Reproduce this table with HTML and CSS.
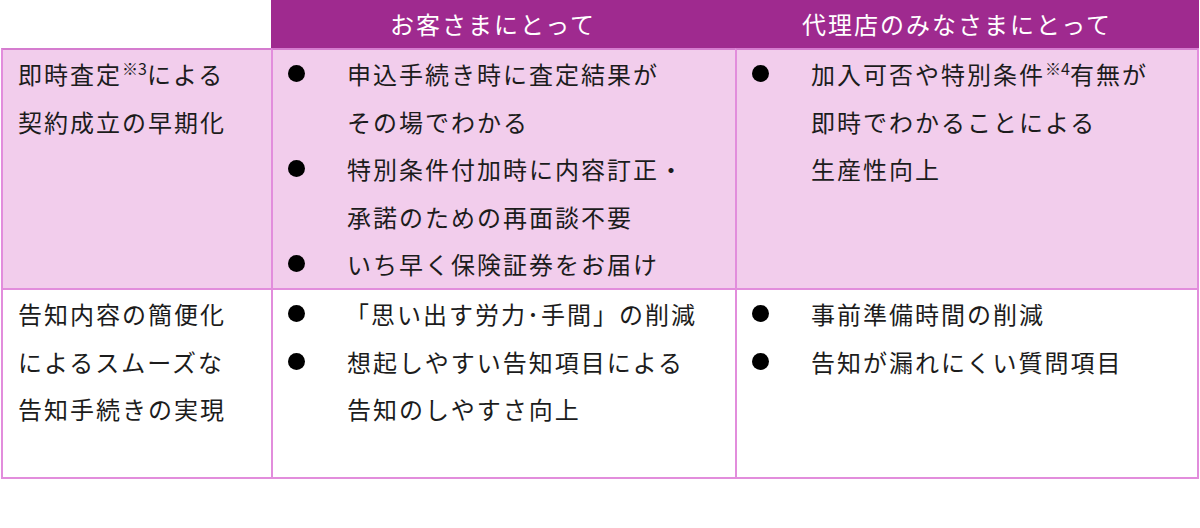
FILE: index.html
```html
<!DOCTYPE html>
<html lang="ja">
<head>
<meta charset="utf-8">
<link rel="stylesheet" href="styles.css">
</head>
<body>
<div class="table">
  <div class="head-blank"></div>
  <div class="head">お客さまにとって</div>
  <div class="head">代理店のみなさまにとって</div>

  <div class="cell label pink first">即時査定<sup class="note">※3</sup>による<br>契約成立の早期化</div>
  <div class="cell pink">
    <ul class="list">
      <li><span class="dot"></span><span>申込手続き時に査定結果が<br>その場でわかる</span></li>
      <li><span class="dot"></span><span>特別条件付加時に内容訂正・<br>承諾のための再面談不要</span></li>
      <li><span class="dot"></span><span>いち早く保険証券をお届け</span></li>
    </ul>
  </div>
  <div class="cell pink last">
    <ul class="list">
      <li><span class="dot"></span><span>加入可否や特別条件<sup class="note">※4</sup>有無が<br>即時でわかることによる<br>生産性向上</span></li>
    </ul>
  </div>

  <div class="cell label first bottom">告知内容の簡便化<br>によるスムーズな<br>告知手続きの実現</div>
  <div class="cell bottom">
    <ul class="list">
      <li><span class="dot"></span><span class="bracket">「思い出す労力<span class="mid">･</span>手間」の削減</span></li>
      <li><span class="dot"></span><span>想起しやすい告知項目による<br>告知のしやすさ向上</span></li>
    </ul>
  </div>
  <div class="cell bottom last">
    <ul class="list">
      <li><span class="dot"></span><span>事前準備時間の削減</span></li>
      <li><span class="dot"></span><span>告知が漏れにくい質問項目</span></li>
    </ul>
  </div>
</div>
</body>
</html>
```

FILE: styles.css
```css
html, body {
  margin: 0;
  padding: 0;
  background: #ffffff;
}

body {
  font-family: "Noto Sans CJK JP", "Noto Sans", sans-serif;
  color: #1c1c1c;
}

.table {
  display: grid;
  grid-template-columns: 270px 464px 464px;
  grid-template-rows: 48px 240px 191px;
  margin-left: 1px;
  width: 1198px;
}

.head-blank {
  background: #ffffff;
}

.head {
  background: #9f2a8f;
  color: #ffffff;
  font-size: 24px;
  letter-spacing: 2px;
  display: flex;
  align-items: center;
  justify-content: center;
  padding-right: 20px;
  line-height: 48px;
}

.cell {
  font-size: 24px;
  letter-spacing: 2px;
  line-height: 47.5px;
  border-left: 2px solid #e28ddc;
  border-top: 2px solid #d57ccf;
  padding: 0 0 0 15px;
  box-sizing: border-box;
}

.cell.pink {
  background: #f2cdec;
}

.cell.last {
  border-right: 2px solid #e28ddc;
}

.cell.bottom {
  border-top: 2px solid #e28ddc;
  border-bottom: 2px solid #e28ddc;
}

.note {
  font-size: 16px;
  letter-spacing: 0;
  line-height: 0;
  vertical-align: 9px;
}

.list {
  list-style: none;
  margin: 0;
  padding: 0;
}

.list li {
  display: grid;
  grid-template-columns: 59px 1fr;
  align-items: start;
}

.dot {
  width: 17px;
  height: 17px;
  border-radius: 50%;
  background: #000000;
  margin-top: 15px;
}

.bracket {
  margin-left: -2px;
}

.mid {
  letter-spacing: 0;
  margin: 0 2px 0 0;
}
```
